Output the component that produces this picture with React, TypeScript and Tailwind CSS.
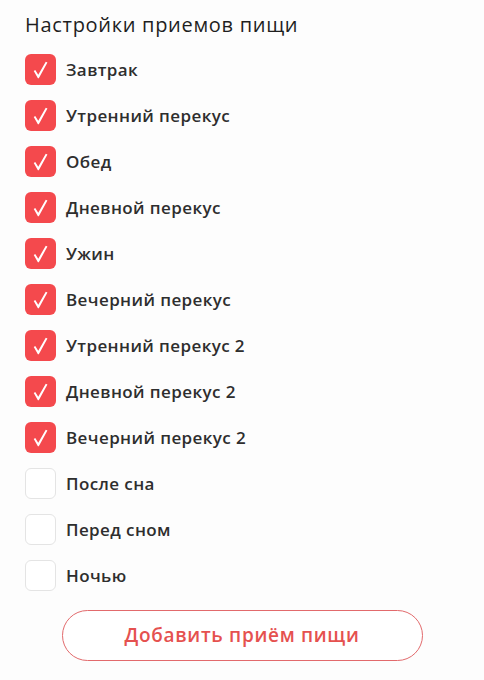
const meals = [
  { name: 'Завтрак', on: true },
  { name: 'Утренний перекус', on: true },
  { name: 'Обед', on: true },
  { name: 'Дневной перекус', on: true },
  { name: 'Ужин', on: true },
  { name: 'Вечерний перекус', on: true },
  { name: 'Утренний перекус 2', on: true },
  { name: 'Дневной перекус 2', on: true },
  { name: 'Вечерний перекус 2', on: true },
  { name: 'После сна', on: false },
  { name: 'Перед сном', on: false },
  { name: 'Ночью', on: false },
];

function Check({ on }: { on: boolean }) {
  if (!on) {
    return <span className="h-[31px] w-[31px] shrink-0 rounded-[6px] border border-[#e4e4e4] bg-white" />;
  }
  return (
    <span className="flex h-[31px] w-[31px] shrink-0 items-center justify-center rounded-[6px] bg-[#f4494d]">
      <svg width="15" height="18" viewBox="0 0 16 19" fill="white">
        <path d="M0.8 10.6 L2.4 9.6 L5.6 14.6 L13.6 0.6 L15.4 1.4 L6.2 18.4 L5.2 18.4 Z" />
      </svg>
    </span>
  );
}

export default function App() {
  return (
    <div className="h-[680px] w-[484px] bg-[#fdfdfd] px-[25px] pt-[12px] font-['Open_Sans',sans-serif]">
      <h1 className="text-[20px] font-medium leading-[26px] tracking-[0.7px] text-[#1f1f1f]">
        Настройки приемов пищи
      </h1>
      <ul className="mt-[16px] flex flex-col gap-[15px]">
        {meals.map((m) => (
          <li key={m.name} className="flex items-center gap-[10px]">
            <Check on={m.on} />
            <span className="text-[17px] font-semibold tracking-[0.4px] text-[#2e2e2e]">{m.name}</span>
          </li>
        ))}
      </ul>
      <div className="mt-[19px] flex justify-center">
        <button className="h-[51px] w-[361px] rounded-full border border-[#e26a6c] bg-white text-[19px] font-semibold tracking-[0.7px] text-[#e5514f]">
          Добавить приём пищи
        </button>
      </div>
    </div>
  );
}
